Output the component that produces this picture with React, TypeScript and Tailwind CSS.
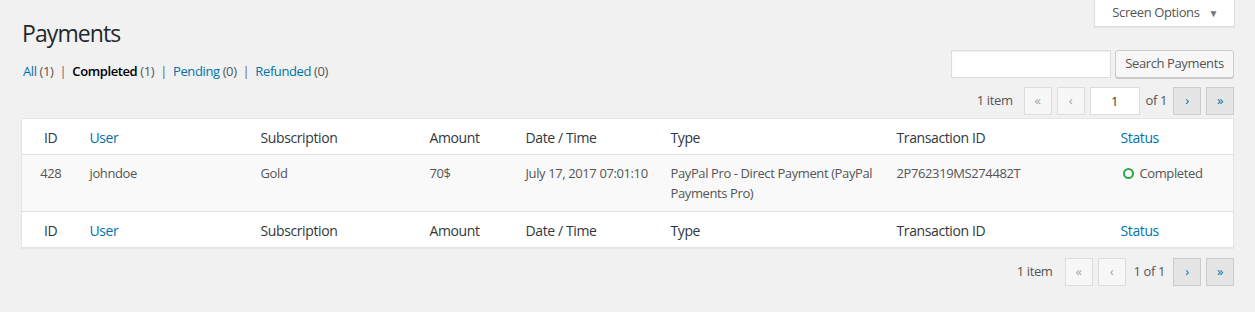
import { useState } from 'react';

const cols = [
  { key: 'id', label: 'ID', w: 'w-[58px]', center: true, link: false },
  { key: 'user', label: 'User', w: 'w-[171px]', link: true },
  { key: 'sub', label: 'Subscription', w: 'w-[169px]', link: false },
  { key: 'amount', label: 'Amount', w: 'w-[96px]', link: false },
  { key: 'date', label: 'Date / Time', w: 'w-[145px]', link: false },
  { key: 'type', label: 'Type', w: 'w-[226px]', link: false },
  { key: 'txn', label: 'Transaction ID', w: 'w-[224px]', link: false },
  { key: 'status', label: 'Status', w: '', link: true },
];

function HeadRow({ top }: { top: boolean }) {
  return (
    <tr className={top ? 'border-b border-[#e1e1e1]' : 'border-t border-[#e1e1e1]'}>
      {cols.map((c) => (
        <th
          key={c.key}
          className={`${c.w} px-[10px] pt-[9px] pb-[7px] text-[14px] leading-[19px] font-normal ${c.center ? 'text-center' : 'text-left'} ${
            c.link ? 'text-[#0073aa]' : 'text-[#32373c]'
          }`}
        >
          {c.label}
        </th>
      ))}
    </tr>
  );
}

function PageBtn({ label, active }: { label: string; active?: boolean }) {
  return (
    <span
      className={`flex h-[28px] w-[28px] items-center justify-center border text-[13px] ${
        active ? 'bg-[#e5e5e5] border-[#ccc] text-[#0073aa]' : 'bg-[#f7f7f7] border-[#ddd] text-[#a0a5aa]'
      }`}
    >
      {label}
    </span>
  );
}

export default function App() {
  const [page, setPage] = useState('1');
  const [q, setQ] = useState('');

  return (
    <div className="min-h-[312px] bg-[#f1f1f1] text-[13px] tracking-[-0.03em] text-[#444] font-['Open_Sans',sans-serif]">
      <div className="flex justify-end pr-[20px]">
        <button className="flex h-[27px] items-center gap-[9px] border border-t-0 border-[#ddd] bg-white pl-[17px] pr-[16px] text-[13px] tracking-[-0.03em] text-[#555] shadow-[0_1px_1px_rgba(0,0,0,0.04)]">
          Screen Options
          <span className="text-[10px] text-[#72777c]">▼</span>
        </button>
      </div>

      <div className="px-[21px]">
        <h1 className="mt-[-8px] pl-[1px] text-[23px] font-normal leading-[29px] tracking-[-0.04em] text-[#23282d]">Payments</h1>

        <div className="mt-[2px] flex items-end justify-between">
          <ul className="mb-[-3px] flex items-center pl-[2px] text-[13px] text-[#555]">
            <li>
              <a className="text-[#0073aa]">All </a>
              <span>(1)</span>
              <span className="px-[6px] text-[#666]">|</span>
            </li>
            <li>
              <a className="font-semibold text-black">Completed </a>
              <span>(1)</span>
              <span className="px-[6px] text-[#666]">|</span>
            </li>
            <li>
              <a className="text-[#0073aa]">Pending </a>
              <span>(0)</span>
              <span className="px-[6px] text-[#666]">|</span>
            </li>
            <li>
              <a className="text-[#0073aa]">Refunded </a>
              <span>(0)</span>
            </li>
          </ul>

          <div className="flex items-center gap-[4px]">
            <input
              value={q}
              onChange={(e) => setQ(e.target.value)}
              className="h-[28px] w-[160px] border border-[#ddd] bg-white px-[6px] shadow-[inset_0_1px_2px_rgba(0,0,0,0.07)] outline-none"
            />
            <button className="h-[28px] w-[119px] rounded-[3px] border border-[#ccc] bg-[#f7f7f7] text-[13px] tracking-[-0.03em] text-[#555] shadow-[0_1px_0_#ccc]">
              Search Payments
            </button>
          </div>
        </div>

        <div className="mt-[9px] flex items-center justify-end gap-[5px] text-[#555]">
          <span className="mr-[6px]">1 item</span>
          <PageBtn label="«" />
          <PageBtn label="‹" />
          <input
            value={page}
            onChange={(e) => setPage(e.target.value)}
            className="h-[28px] w-[50px] border border-[#ddd] bg-white text-center text-[13px] text-[#32373c] outline-none"
          />
          <span className="mx-[1px]">of 1</span>
          <PageBtn label="›" active />
          <PageBtn label="»" active />
        </div>

        <table className="mt-[3px] w-full table-fixed border border-[#e5e5e5] bg-white shadow-[0_1px_1px_rgba(0,0,0,0.04)]">
          <thead>
            <HeadRow top />
          </thead>
          <tbody>
            <tr className="bg-[#f9f9f9] align-top text-[13px] leading-[20px] text-[#555]">
              <td className="px-[10px] py-[8px] text-center">428</td>
              <td className="px-[10px] py-[8px]">johndoe</td>
              <td className="px-[10px] py-[8px]">Gold</td>
              <td className="px-[10px] py-[8px]">70$</td>
              <td className="px-[10px] py-[8px] whitespace-nowrap">July 17, 2017 07:01:10</td>
              <td className="px-[10px] py-[8px]">PayPal Pro - Direct Payment (PayPal Payments Pro)</td>
              <td className="px-[10px] py-[8px]">2P762319MS274482T</td>
              <td className="px-[10px] py-[8px]">
                <span className="flex items-center gap-[6px]">
                  <span className="ml-[2px] inline-block h-[11px] w-[11px] rounded-full border-[2px] border-[#2ea64b]" />
                  Completed
                </span>
              </td>
            </tr>
          </tbody>
          <tfoot>
            <HeadRow top={false} />
          </tfoot>
        </table>

        <div className="mt-[10px] flex items-center justify-end gap-[5px] text-[#555]">
          <span className="mr-[7px]">1 item</span>
          <PageBtn label="«" />
          <PageBtn label="‹" />
          <span className="mx-[3px]">1 of 1</span>
          <PageBtn label="›" active />
          <PageBtn label="»" active />
        </div>
      </div>
    </div>
  );
}
